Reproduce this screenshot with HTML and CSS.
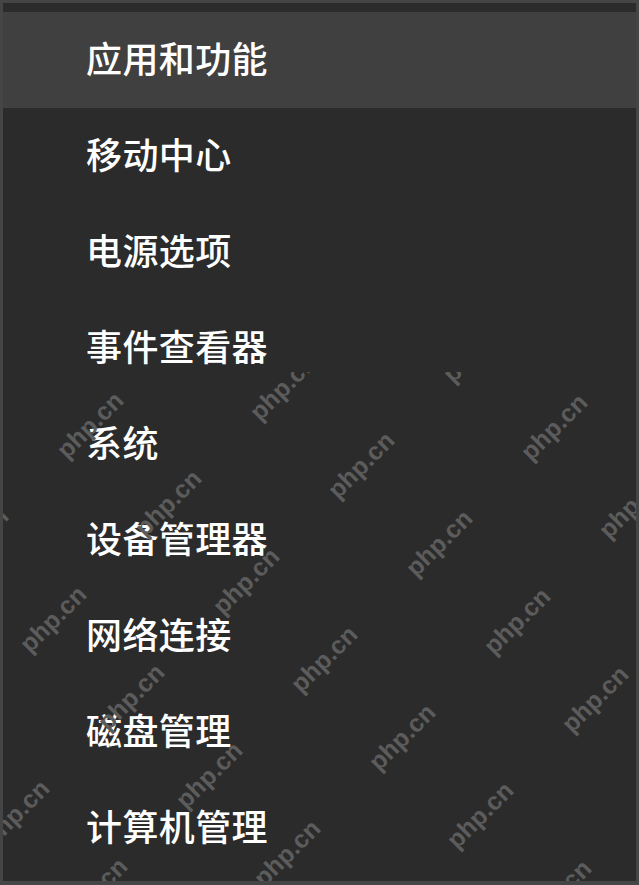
FILE: index.html
```html
<!DOCTYPE html>
<html lang="zh-CN">
<head>
    <meta charset="UTF-8">
    <meta name="viewport" content="width=device-width, initial-scale=1.0">
    <title>快速链接菜单</title>
    <link rel="stylesheet" href="styles.css">
</head>
<body>
    <div class="menu">
        <ul class="menu-list">
            <li class="menu-item active">应用和功能</li>
            <li class="menu-item">移动中心</li>
            <li class="menu-item">电源选项</li>
            <li class="menu-item">事件查看器</li>
            <li class="menu-item">系统</li>
            <li class="menu-item">设备管理器</li>
            <li class="menu-item">网络连接</li>
            <li class="menu-item">磁盘管理</li>
            <li class="menu-item">计算机管理</li>
        </ul>

        <!-- site watermark, tiled diagonally over the lower part -->
        <div class="watermarks" id="watermarks"></div>
    </div>

    <script>
        // Lay out the watermark tiles on a slanted grid
        const layer = document.getElementById('watermarks');
        const origin = { x: 90, y: 425 };
        const stepA = { x: 78, y: 78 };
        const stepB = { x: 193, y: -38 };

        for (let i = -6; i <= 8; i++) {
            for (let j = -3; j <= 5; j++) {
                const cx = origin.x + i * stepA.x + j * stepB.x;
                const cy = origin.y + i * stepA.y + j * stepB.y;
                if (cx < -60 || cx > 700 || cy < 300 || cy > 940) continue;

                const mark = document.createElement('span');
                mark.className = 'watermark';
                mark.textContent = 'php.cn';
                mark.style.left = cx + 'px';
                mark.style.top = (cy - 372) + 'px';
                layer.appendChild(mark);
            }
        }
    </script>
</body>
</html>
```

FILE: styles.css
```css
html, body {
    margin: 0;
    padding: 0;
}

body {
    background-color: #2b2b2b;
    font-family: "Noto Sans CJK SC", "Noto Sans", sans-serif;
}

.menu {
    position: relative;
    width: 639px;
    height: 885px;
    box-sizing: border-box;
    padding-top: 9px;
    background-color: #2b2b2b;
    border: 3px solid #454545;
    border-bottom-width: 4px;
    overflow: hidden;
}

.menu-list {
    list-style: none;
    margin: 0;
    padding: 0;
}

.menu-item {
    display: flex;
    align-items: center;
    height: 96px;
    box-sizing: border-box;
    padding-left: 83px;
    padding-bottom: 6px;
    color: #ffffff;
    font-size: 36px;
    font-weight: 500;
    line-height: 1;
    letter-spacing: 0.4px;
}

.menu-item.active {
    margin: 0 -3px;
    padding-left: 86px;
    background-color: #404040;
}

.watermarks {
    position: absolute;
    left: -3px;
    right: -3px;
    top: 369px;
    bottom: -4px;
    overflow: hidden;
    pointer-events: none;
}

.watermark {
    position: absolute;
    transform: translate(-50%, -50%) rotate(-45deg);
    font-family: "Liberation Sans", Arial, sans-serif;
    font-weight: bold;
    font-size: 25px;
    color: #5c5c5c;
    white-space: nowrap;
}
```
